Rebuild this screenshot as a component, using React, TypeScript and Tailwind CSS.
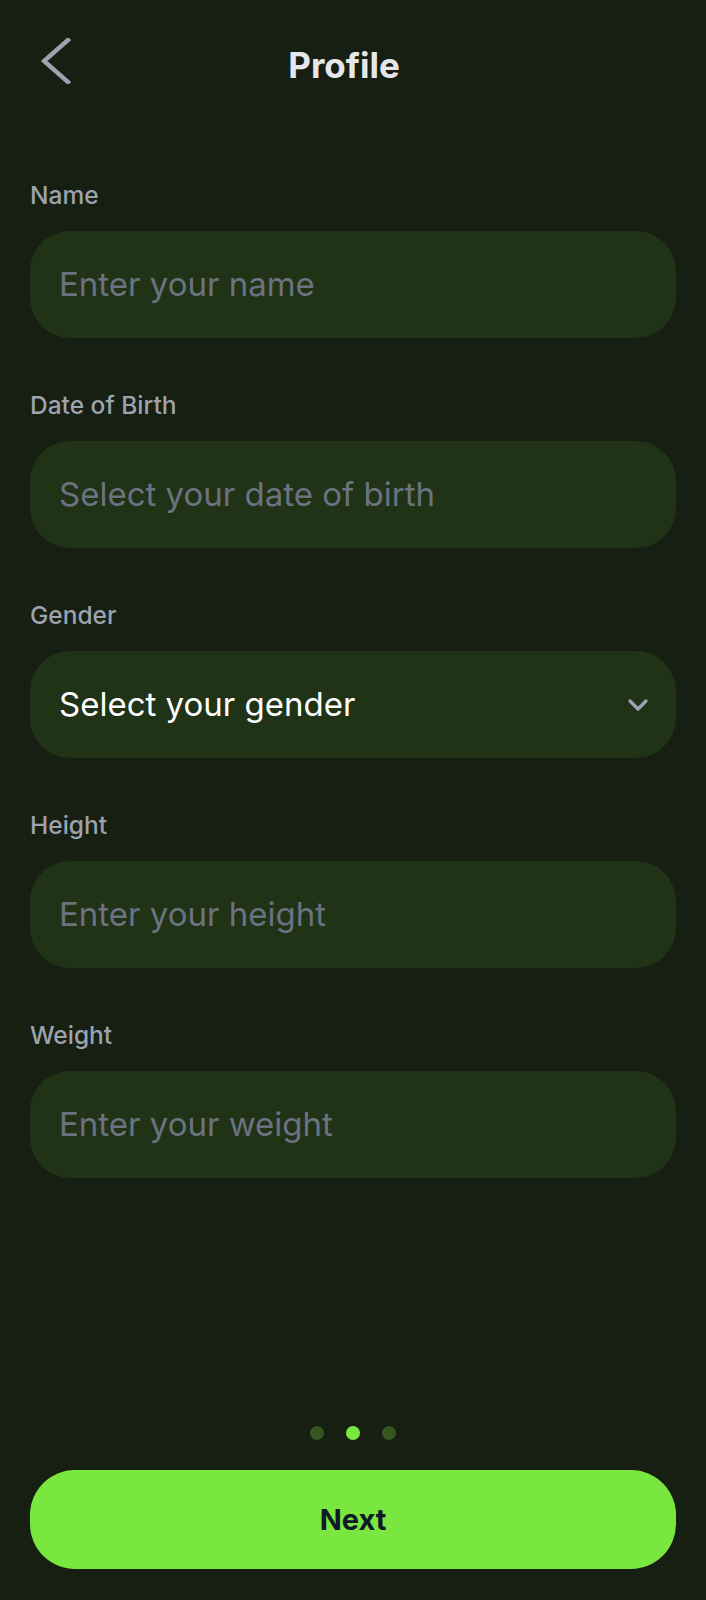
import { ChevronDown } from 'lucide-react';

const fields = [
  { label: 'Name', placeholder: 'Enter your name' },
  { label: 'Date of Birth', placeholder: 'Select your date of birth' },
  { label: 'Gender', placeholder: 'Select your gender', select: true },
  { label: 'Height', placeholder: 'Enter your height' },
  { label: 'Weight', placeholder: 'Enter your weight' },
];

export default function App() {
  return (
    <div
      className="w-full h-[1600px] bg-[#161f12] flex flex-col px-[30px]"
      style={{ fontFamily: 'Inter, "Noto Sans", sans-serif' }}
    >
      {/* Header */}
      <div className="h-[130px] grid grid-cols-[1fr_auto_1fr] items-center">
        <button type="button" className="justify-self-start ml-[11px] mt-[-8px]">
          <svg width="30" height="46" viewBox="0 0 30 46" fill="none">
            <polyline
              points="27,2 3,23 27,44"
              stroke="#9ca3af"
              strokeWidth="4.5"
              strokeLinecap="square"
              strokeLinejoin="miter"
            />
          </svg>
        </button>
        <h1 className="text-[35px] font-bold text-[#e5e7eb] mr-[18px]">Profile</h1>
        <div />
      </div>

      {/* Form */}
      <div className="mt-[51px] flex flex-col gap-[53px]">
        {fields.map((f) => (
          <div key={f.label} className="flex flex-col gap-[22px]">
            <label className="text-[24.5px] leading-[28px] font-medium text-[#9ca3af]">{f.label}</label>
            <div className="h-[107px] rounded-[40px] bg-[#213317] flex items-center justify-between pl-[29px] pr-[22px]">
              <span className={f.select ? 'text-[33px] text-white' : 'text-[33px] text-[#6b7280]'}>
                {f.placeholder}
              </span>
              {f.select && <ChevronDown className="w-[32px] h-[32px] text-[#9ca3af]" strokeWidth={2.5} />}
            </div>
          </div>
        ))}
      </div>

      <div className="flex-1" />

      {/* Pager dots */}
      <div className="flex justify-center gap-[22px] mb-[30px]">
        <span className="w-[14px] h-[14px] rounded-full bg-[#35561f]" />
        <span className="w-[14px] h-[14px] rounded-full bg-[#7ae640]" />
        <span className="w-[14px] h-[14px] rounded-full bg-[#35561f]" />
      </div>

      <button
        type="button"
        className="h-[99px] mb-[31px] rounded-[45px] bg-[#7ae640] text-[#111827] text-[29px] font-bold"
      >
        Next
      </button>
    </div>
  );
}
